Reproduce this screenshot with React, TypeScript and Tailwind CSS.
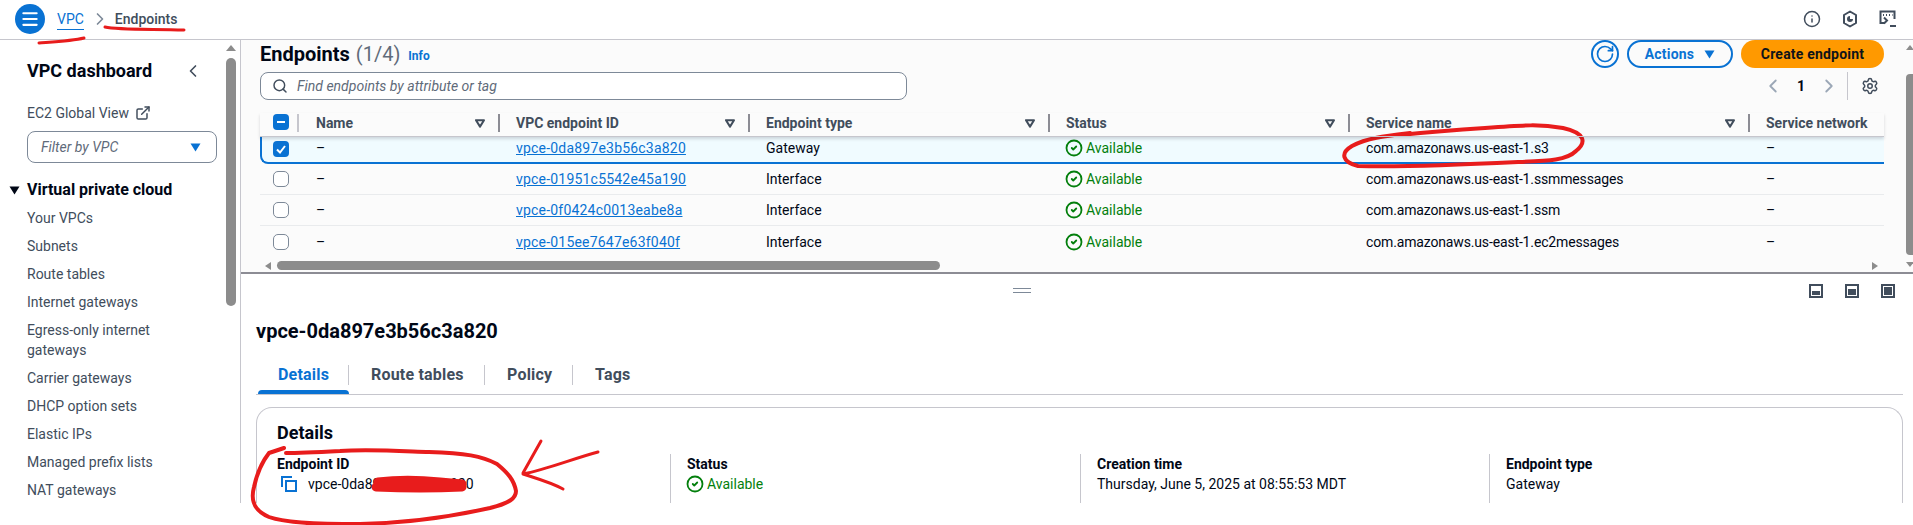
import React from "react";
import { ChevronLeft, ChevronRight, CircleCheck, ExternalLink, Info, Menu, RotateCw, Search, Settings } from "lucide-react";

type Endpoint = {
  id: string;
  type: string;
  service: string;
};

const endpoints: Endpoint[] = [
  { id: "vpce-01951c5542e45a190", type: "Interface", service: "com.amazonaws.us-east-1.ssmmessages" },
  { id: "vpce-0f0424c0013eabe8a", type: "Interface", service: "com.amazonaws.us-east-1.ssm" },
  { id: "vpce-015ee7647e63f040f", type: "Interface", service: "com.amazonaws.us-east-1.ec2messages" },
];

const gridCols = "grid grid-cols-[40px_200px_250px_300px_300px_400px_134px]";

const columns = ["Name", "VPC endpoint ID", "Endpoint type", "Status", "Service name"];

const navTop = ["Your VPCs", "Subnets", "Route tables", "Internet gateways"];
const navBottom = ["Carrier gateways", "DHCP option sets", "Elastic IPs", "Managed prefix lists", "NAT gateways"];

const FilterCaret = () => (
  <svg width="10" height="9" viewBox="0 0 10 9">
    <path d="M1 1.2h8L5 7.6z" fill="none" stroke="#414d5c" strokeWidth="2" strokeLinejoin="round" />
  </svg>
);

const SolidCaret = ({ color }: { color: string }) => (
  <svg width="11" height="9" viewBox="0 0 11 9">
    <path d="M0.5 0.5h10L5.5 8.5z" fill={color} />
  </svg>
);

const Checkbox = ({ state }: { state?: "checked" | "mixed" }) => {
  if (!state) {
    return <span className="block h-4 w-4 rounded-[5px] border border-[#7d8998] bg-white" />;
  }
  return (
    <span className="flex h-4 w-4 items-center justify-center rounded-[4px] bg-[#0972d3]">
      <svg width="12" height="12" viewBox="0 0 12 12">
        {state === "checked" ? (
          <path d="M2 6.5l3 3L10 3" fill="none" stroke="#fff" strokeWidth="2" />
        ) : (
          <path d="M2 6h8" fill="none" stroke="#fff" strokeWidth="2" />
        )}
      </svg>
    </span>
  );
};

const Available = () => (
  <span className="-ml-px flex items-center gap-[3px] text-[#037f0c]">
    <CircleCheck size={18} strokeWidth={2.4} />
    Available
  </span>
);

const PanelSizeIcon = ({ fill }: { fill: string }) => (
  <span className="flex h-[14px] w-[14px] items-end border-2 border-[#414d5c] p-px">
    <span className={`w-full bg-[#414d5c] ${fill}`} />
  </span>
);

const Field = ({ label, children, divider }: { label: string; children: React.ReactNode; divider?: boolean }) => (
  <div className={divider ? "border-l border-[#c6c6cd] pl-4" : ""}>
    <div className="h-5 font-bold leading-5 text-[#000716]">{label}</div>
    <div className="flex h-5 items-center leading-5 text-[#000716]">{children}</div>
  </div>
);

const Annotations = () => (
  <svg className="pointer-events-none absolute inset-0" width="1913" height="525" viewBox="0 0 1913 525" fill="none" stroke="#e81c1c" strokeLinecap="round" strokeLinejoin="round">
    <path d="M39 43C52 42 72 41 84 38" strokeWidth="3" />
    <path d="M105 27C118 30 150 29 184 30" strokeWidth="3" />
    <path d="M1410 133C1385 136 1367 138 1352 146C1340 153 1342 162 1358 166C1395 167 1457 165 1518 162C1550 161 1567 160 1576 151C1587 142 1585 133 1563 128C1540 124 1526 125 1485 128C1455 130 1430 132 1400 135" strokeWidth="4" />
    <path d="M284 448L269 453C262 462 257 473 254 487C250 502 255 511 269 517C285 523 318 524 360 524C408 523 450 517 490 508C510 503 516 498 516 491C514 480 508 473 497 464C482 456 465 453 429 452C400 451 367 449 340 451C320 452 300 453 286 453" strokeWidth="4" />
    <path d="M541 441L523 473M598 452C575 458 545 470 523 474C535 478 550 482 563 489" strokeWidth="3" />
    <path d="M378 482C395 480 420 480 440 482L462 484M376 487C400 488 440 488 462 487" strokeWidth="9" />
  </svg>
);

export default function App() {
  return (
    <div className="relative h-[525px] w-[1913px] overflow-hidden bg-white font-[Roboto,sans-serif] text-sm text-[#000716]">
      {/* --- TOP BAR --- */}
      <header className="flex h-10 items-center border-b border-[#c6c6cd] pb-px pl-[15px]">
        <button className="flex h-[30px] w-[30px] items-center justify-center rounded-full bg-[#0972d3] text-white">
          <Menu size={20} strokeWidth={2.5} />
        </button>
        <a className="ml-3 border-b border-[#0972d3] leading-5 text-[#0972d3]">VPC</a>
        <ChevronRight className="ml-[6px] text-[#7d8998]" size={20} />
        <span className="ml-[5px] font-medium text-[#414d5c]">Endpoints</span>
        <div className="ml-auto flex items-center gap-[20px] pr-[16px] text-[#414d5c]">
          <Info size={18} strokeWidth={2} />
          <svg width="18" height="18" viewBox="0 0 18 18" fill="none" stroke="#414d5c" strokeWidth="2">
            <path d="M9 1.5l6 3.5v8l-6 3.5L3 13V5z" strokeLinejoin="round" />
            <path d="M9 6a3 3 0 1 0 3 3H9z" fill="#414d5c" stroke="none" />
          </svg>
          <svg width="18" height="18" viewBox="0 0 18 18" fill="none" stroke="#414d5c" strokeWidth="2">
            <path d="M6 13H1.500V1.500h14V9" />
            <path d="M4 5h1M7 5h1M10 5h1M13 5h.5" />
            <path d="M5 7.500l3 3-3 3M11 16h6" />
          </svg>
        </div>
      </header>

      <div className="flex h-[463px]">
        {/* --- SIDEBAR --- */}
        <aside className="flex w-[241px] border-r border-[#c6c6cd]">
          <nav className="w-[226px] overflow-hidden">
            <div className="mt-[19px] flex h-6 items-center justify-between pl-[27px] pr-[23px]">
              <span className="text-lg font-bold">VPC dashboard</span>
              <ChevronLeft size={20} strokeWidth={2} className="text-[#414d5c]" />
            </div>
            <div className="mt-[20px] flex h-5 items-center gap-[6px] pl-[27px] text-[#414d5c]">
              EC2 Global View
              <ExternalLink size={16} strokeWidth={2.2} />
            </div>
            <div className="ml-[27px] mt-[8px] flex h-8 w-[190px] items-center justify-between rounded-lg border border-[#7d8998] pl-[13px] pr-[15px] italic text-[#5f6b7a]">
              Filter by VPC
              <SolidCaret color="#0972d3" />
            </div>
            <div className="mt-[15px] flex h-6 items-center">
              <span className="ml-[9px] w-[18px]">
                <SolidCaret color="#000716" />
              </span>
              <span className="text-base font-bold">Virtual private cloud</span>
            </div>
            <ul className="mt-[2px] pl-[27px] text-[#414d5c]">
              {navTop.map((item) => (
                <li key={item} className="flex h-7 items-center">
                  {item}
                </li>
              ))}
              <li className="w-[150px] py-1 leading-5">Egress-only internet gateways</li>
              {navBottom.map((item) => (
                <li key={item} className="flex h-7 items-center">
                  {item}
                </li>
              ))}
            </ul>
          </nav>
          <div className="flex w-[10px] flex-col items-center">
            <div className="mt-[5px] h-0 w-0 border-x-[5px] border-b-[6px] border-x-transparent border-b-[#8c8c8c]" />
            <div className="mt-[7px] h-[248px] w-[10px] rounded-[5px] bg-[#8c8c8c]" />
          </div>
        </aside>

        <main className="flex min-w-0 flex-1 flex-col">
          {/* --- ENDPOINT TABLE PANEL --- */}
          <section className="flex h-[234px] border-b-2 border-[#8c8c94] bg-[#fbfbfb]">
            <div className="w-[1665px] pl-[19px] pr-[22px]">
              <div className="flex h-7 items-center">
                <h1 className="text-xl font-bold leading-7">Endpoints</h1>
                <span className="ml-[6px] text-xl leading-7 text-[#5f6b7a]">(1/4)</span>
                <a className="ml-2 mt-[3px] text-xs font-bold text-[#0972d3]">Info</a>
                <div className="ml-auto flex items-center gap-2">
                  <button className="flex h-7 w-7 items-center justify-center rounded-full border-2 border-[#0972d3] text-[#0972d3]">
                    <RotateCw size={20} strokeWidth={2} />
                  </button>
                  <button className="flex h-7 w-[106px] items-center justify-center gap-[10px] rounded-full border-2 border-[#0972d3] font-bold tracking-[0.2px] text-[#0972d3]">
                    Actions
                    <SolidCaret color="#0972d3" />
                  </button>
                  <button className="h-7 w-[143px] rounded-full bg-[#ff9900] font-bold tracking-[0.2px] text-[#0f141a]">Create endpoint</button>
                </div>
              </div>

              <div className="mt-1 flex h-7 items-center">
                <div className="flex h-7 w-[647px] items-center rounded-lg border border-[#7d8998] bg-white pl-[11px] italic text-[#5f6b7a]">
                  <Search size={16} strokeWidth={2.2} className="text-[#414d5c]" />
                  <span className="ml-[9px]">Find endpoints by attribute or tag</span>
                </div>
                <div className="ml-auto flex h-7 items-center text-[#9ba7b6]">
                  <ChevronLeft size={22} strokeWidth={2} />
                  <span className="ml-[13px] w-2 font-bold text-[#000716]">1</span>
                  <ChevronRight size={22} strokeWidth={2} className="ml-[13px]" />
                  <span className="ml-[7px] h-7 w-px bg-[#c6c6cd]" />
                  <Settings size={18} strokeWidth={2} className="ml-[13px] mr-[5px] text-[#414d5c]" />
                </div>
              </div>

              {/* --- TABLE --- */}
              <div className={`${gridCols} relative z-10 mt-[13px] h-6 items-start border-b border-[#c6c6cd] pt-px font-bold text-[#414d5c] shadow-[0_2px_3px_rgba(0,7,22,0.15)]`}>
                <div className="flex h-[18px] items-center justify-between pl-[13px]">
                  <span className="mb-[2px]">
                    <Checkbox state="mixed" />
                  </span>
                  <span className="mr-px h-[18px] w-[2px] bg-[#c6c6cd]" />
                </div>
                {columns.map((col) => (
                  <div key={col} className="flex h-[18px] items-center justify-between pl-[16px]">
                    <span className="leading-5">{col}</span>
                    <span className="flex items-center gap-[13px]">
                      <FilterCaret />
                      <span className="h-[18px] w-[2px] bg-[#8c8c94]" />
                    </span>
                  </div>
                ))}
                <div className="flex h-[18px] items-center pl-[16px] leading-5">Service network</div>
              </div>

              <div className="grid h-[27px] grid-cols-[38px_200px_250px_300px_300px_400px_134px] items-center rounded-bl-lg border-b-2 border-l-2 border-[#0972d3] bg-[#f0fbff] pb-[3px]">
                <div className="ml-[11px] mt-[1px]">
                  <Checkbox state="checked" />
                </div>
                <div className="pl-[16px]">–</div>
                <a className="pl-[16px] tracking-[0.2px] text-[#0972d3] underline">vpce-0da897e3b56c3a820</a>
                <div className="pl-[16px]">Gateway</div>
                <div className="pl-[16px]">
                  <Available />
                </div>
                <div className="pl-[16px] tracking-[-0.15px]">com.amazonaws.us-east-1.s3</div>
                <div className="pl-[16px]">–</div>
              </div>
              {endpoints.map((ep, i) => (
                <div key={ep.id} className={`${gridCols} h-[31px] items-center ${i < 2 ? "border-b border-[#e9ebed]" : ""}`}>
                  <div className="ml-[13px]">
                    <Checkbox />
                  </div>
                  <div className="pl-[16px]">–</div>
                  <a className="pl-[16px] tracking-[0.2px] text-[#0972d3] underline">{ep.id}</a>
                  <div className="pl-[16px]">{ep.type}</div>
                  <div className="pl-[16px]">
                    <Available />
                  </div>
                  <div className="pl-[16px] tracking-[-0.15px]">{ep.service}</div>
                  <div className="pl-[16px]">–</div>
                </div>
              ))}

              {/* --- HORIZONTAL SCROLLBAR --- */}
              <div className="mt-1 flex h-[9px] items-center">
                <span className="ml-[5px] h-0 w-0 border-y-[4px] border-r-[6px] border-y-transparent border-r-[#8c8c8c]" />
                <span className="ml-[6px] h-[9px] w-[663px] rounded-[5px] bg-[#8c8c8c]" />
                <span className="ml-[932px] h-0 w-0 border-y-[4px] border-l-[6px] border-y-transparent border-l-[#8c8c8c]" />
              </div>
            </div>
            <div className="flex w-[7px] flex-col items-center">
              <div className="mt-[5px] h-0 w-0 border-x-[4px] border-b-[5px] border-x-transparent border-b-[#8c8c8c]" />
              <div className="mt-[24px] h-[181px] w-[7px] rounded-l-[4px] bg-[#8c8c8c]" />
              <div className="mt-[7px] h-0 w-0 border-x-[4px] border-t-[5px] border-x-transparent border-t-[#8c8c8c]" />
            </div>
          </section>

          {/* --- DETAIL PANEL --- */}
          <section className="pl-[15px] pr-[10px]">
            <div className="flex h-[28px] items-start pt-[9px]">
              <div className="ml-[757px] mt-[5px] h-[5px] w-[18px] border-y border-[#7d8998]" />
              <div className="ml-auto mt-px flex gap-[22px] pr-[8px]">
                <PanelSizeIcon fill="h-[4px]" />
                <PanelSizeIcon fill="h-[6px]" />
                <PanelSizeIcon fill="h-full" />
              </div>
            </div>
            <h2 className="mt-[15px] h-7 text-xl font-bold leading-7">vpce-0da897e3b56c3a820</h2>
            <div className="mt-[15px] flex h-[35px] border-b border-[#c6c6cd] text-base font-bold tracking-[0.2px] text-[#414d5c]">
              <div className="relative h-[34px] w-[93px] pl-[22px] pt-[5px] text-[#0972d3]">
                <div className="flex h-5 items-center border-r border-[#c6c6cd]">Details</div>
                <span className="absolute bottom-0 left-[2px] right-0 h-1 rounded-t-sm bg-[#0972d3]" />
              </div>
              <div className="mt-[5px] flex h-5 w-[136px] items-center border-r border-[#c6c6cd] pl-[22px]">Route tables</div>
              <div className="mt-[5px] flex h-5 w-[88px] items-center border-r border-[#c6c6cd] pl-[22px]">Policy</div>
              <div className="mt-[5px] flex h-5 items-center pl-[22px]">Tags</div>
            </div>
            <div className="mt-[12px] h-[96px] rounded-t-2xl border border-b-0 border-[#c6c6cd] pl-[20px]">
              <h3 className="mt-[13px] h-6 text-lg font-bold leading-6">Details</h3>
              <div className="mt-[9px] grid h-[49px] grid-cols-[393px_410px_409px_1fr]">
                <Field label="Endpoint ID">
                  <svg width="18" height="18" viewBox="0 0 18 18" fill="none" stroke="#0972d3" strokeWidth="2" className="ml-[3px]">
                    <rect x="6" y="6" width="10" height="10" />
                    <path d="M2 12V2h10" />
                  </svg>
                  <span className="ml-[10px]">vpce-0da897e3b56c3a820</span>
                </Field>
                <Field label="Status" divider>
                  <Available />
                </Field>
                <Field label="Creation time" divider>
                  Thursday, June 5, 2025 at 08:55:53 MDT
                </Field>
                <Field label="Endpoint type" divider>
                  Gateway
                </Field>
              </div>
            </div>
          </section>
        </main>
      </div>
      <Annotations />
    </div>
  );
}
